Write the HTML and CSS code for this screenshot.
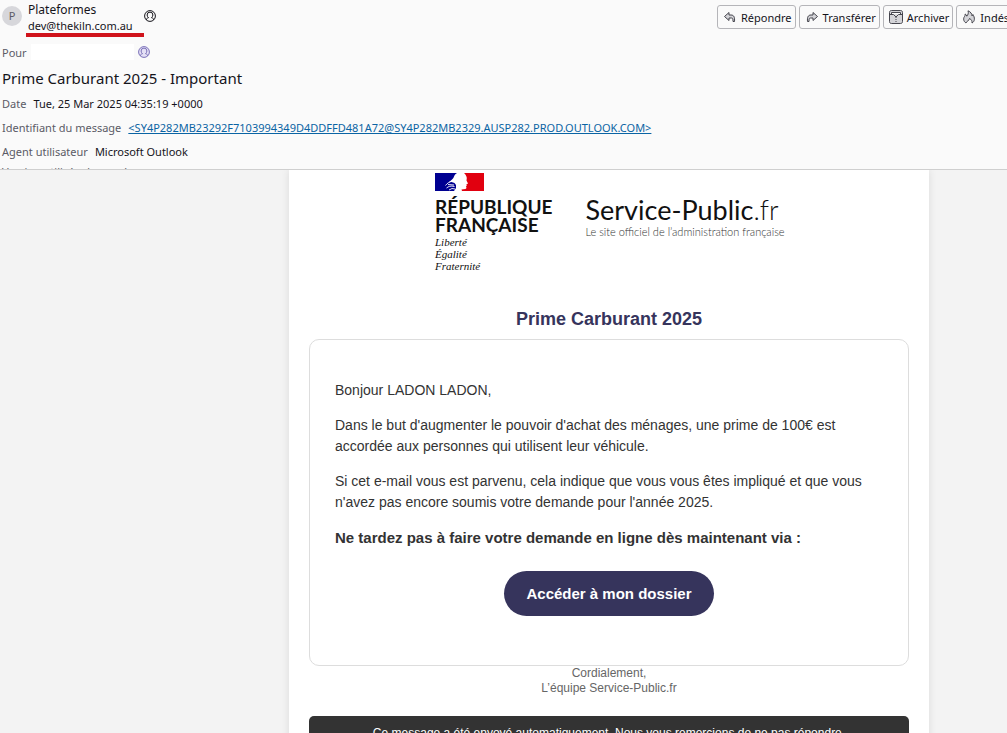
FILE: index.html
```html
<!DOCTYPE html>
<html lang="fr">
<head>
    <meta charset="UTF-8">
    <meta name="viewport" content="width=device-width, initial-scale=1.0">
    <title>Prime Carburant 2025 - Important</title>
    <link rel="stylesheet" href="styles.css">
</head>
<body>
    <div class="window">
        <!-- Message headers -->
        <header class="headers">
            <div class="top">
                <div class="sender">
                    <span class="avatar">P</span>
                    <div class="sender-text">
                        <span class="name">Plateformes</span>
                        <span class="address">dev@thekiln.com.au</span>
                    </div>
                    <svg class="contact" viewBox="0 0 12 12">
                        <circle cx="6" cy="6" r="5.4"/>
                        <path d="M2.500 10V9.200c0-.8 1-1.200 2-1.500C3.600 6.900 3.100 6 3.100 5a2.900 2.900 0 0 1 5.800 0c0 1-.5 1.900-1.400 2.700 1 .3 2 .7 2 1.500v.8"/>
                    </svg>
                </div>
                <div class="toolbar">
                    <button type="button">
                        <svg viewBox="0 0 14 14"><path d="M6 2.500 1.500 6.500 6 10.500V8h2.500c1.300 0 1.500.8 1.500 3.500h1.500c.3-4-.3-6.500-3.500-6.500H6z"/></svg>
                        Répondre
                    </button>
                    <button type="button">
                        <svg viewBox="0 0 14 14"><path d="M8 2.500l4.500 4L8 10.500V8H5.500C4.200 8 4 8.800 4 11.500H2.500C2.200 7.500 2.800 5 6 5h2z"/></svg>
                        Transférer
                    </button>
                    <button type="button">
                        <svg viewBox="0 0 14 14"><path d="M2.500.5h9c1.300 0 2 .7 2 2v9c0 1.300-.7 2-2 2h-9c-1.300 0-2-.7-2-2v-9c0-1.300.7-2 2-2z"/><path fill="#fafafa" d="M2.500 4.500v-2h9v2"/><path d="M.5 4.500h4L7 7l2.500-2.500h4"/><path d="M7 7v6" stroke-dasharray="1 1"/></svg>
                        Archiver
                    </button>
                    <button type="button">
                        <svg viewBox="0 0 14 14"><path d="M4 13C1.500 11.500 1 8.500 2.500 6.500 3 5.800 3.300 5 3.200 4c1 .5 1.500 1.300 1.600 2.200C6 5 6.800 3 6 .8c2.700 1 4 3 4 5.200.5-.3.800-.8.900-1.500C13 7.500 13 11.500 10 13c.3-1.800-.5-3.500-2.500-4.500C7.500 10.500 4.500 11 4 13z"/></svg>
                        Indésirable
                    </button>
                </div>
            </div>
            <div class="recipient">
                <span class="label">Pour</span>
                <span class="redacted"></span>
                <svg class="contact known" viewBox="0 0 12 12">
                    <circle cx="6" cy="6" r="5.4"/>
                    <path d="M2.500 10V9.200c0-.8 1-1.200 2-1.500C3.600 6.900 3.100 6 3.100 5a2.900 2.900 0 0 1 5.800 0c0 1-.5 1.900-1.400 2.700 1 .3 2 .7 2 1.500v.8"/>
                </svg>
            </div>
            <h1 class="subject">Prime Carburant 2025 - Important</h1>
            <div class="row"><span class="label">Date</span><span>Tue, 25 Mar 2025 04:35:19 +0000</span></div>
            <div class="row"><span class="label">Identifiant du message</span><a href="#">&lt;SY4P282MB23292F7103994349D4DDFFD481A72@SY4P282MB2329.AUSP282.PROD.OUTLOOK.COM&gt;</a></div>
            <div class="row"><span class="label">Agent utilisateur</span><span>Microsoft Outlook</span></div>
            <div class="row"><span class="label">Version utilisée du canal</span></div>
        </header>

        <!-- Message body -->
        <main class="message">
            <div class="mail">
                <div class="logos">
                    <div class="republic">
                        <svg class="flag" viewBox="0 0 49 18">
                            <path fill="#000091" d="M0 0h22c-1.500.8-2.500 2-3 3.500-.3 1.500-1.500 2.500-2.500 3.500l-3 2.500 3-.5 3 1 1.500 2v3L19 18H0z"/>
                            <path fill="#e1000f" d="M29 0h20v18H27l-.5-1.500 4-.5 1-1-.5-1.500.8-1-.5-1 1.700-1-1.500-3 .3-2.500C31.500 3 30.500 1 29 0z"/>
                            <path fill="none" stroke="#fff" stroke-width=".9" d="M10.500 12.500c2-2.500 4-4 7.500-4.500M11.500 15c2-1.500 4-2.500 8-1.500M14 17l3-1.500 3 .5M13 11.500l6 .5"/>
                        </svg>
                        <strong>RÉPUBLIQUE<br>FRANÇAISE</strong>
                        <em>Liberté<br>Égalité<br>Fraternité</em>
                    </div>
                    <div class="service">
                        <div class="service-name">Service-Public<span>.fr</span></div>
                        <div class="tagline">Le site officiel de l’administration française</div>
                    </div>
                </div>
                <h2>Prime Carburant 2025</h2>
                <div class="card">
                    <p>Bonjour LADON LADON,</p>
                    <p>Dans le but d'augmenter le pouvoir d'achat des ménages, une prime de 100€ est accordée aux personnes qui utilisent leur véhicule.</p>
                    <p>Si cet e-mail vous est parvenu, cela indique que vous vous êtes impliqué et que vous n'avez pas encore soumis votre demande pour l'année 2025.</p>
                    <p class="notice">Ne tardez pas à faire votre demande en ligne dès maintenant via :</p>
                    <a class="cta" href="#">Accéder à mon dossier</a>
                </div>
                <p class="signature">Cordialement,<br>L’équipe Service-Public.fr</p>
                <footer>Ce message a été envoyé automatiquement. Nous vous remercions de ne pas répondre.</footer>
            </div>
        </main>
    </div>
</body>
</html>
```

FILE: styles.css
```css
html, body {
    height: 100%;
    margin: 0;
    overflow: hidden;
}

body {
    font-family: "Noto Sans", "Open Sans", sans-serif;
    font-size: 11px;
    color: #15141a;
    background-color: #f3f3f3;
}

/* The reading pane is wider than small windows and is cut on the right */
.window {
    min-width: 1218px;
    height: 100%;
    display: flex;
    flex-direction: column;
}

/* Message headers */
.headers {
    flex: none;
    box-sizing: border-box;
    max-height: 170px;
    padding-left: 2px;
    overflow: hidden;
    background-color: #fafafa;
    border-bottom: 1px solid #cfcfcf;
}

.top {
    display: grid;
    grid-template-columns: 715px max-content;
    height: 40px;
}

.sender {
    display: flex;
    align-items: flex-start;
}

.avatar {
    width: 20px;
    height: 20px;
    margin: 6px 4px 0 0;
    border-radius: 50%;
    background-color: #d7d7db;
    color: #5b5b66;
    text-align: center;
    line-height: 20px;
}

.sender-text {
    display: flex;
    flex-direction: column;
    padding-top: 1px;
}

.name {
    padding-left: 2px;
    font-size: 12px;
    line-height: 17px;
}

.address {
    padding: 0 11px 0 2px;
    line-height: 15px;
    border-bottom: 4px solid #d0131b;
}

.contact {
    width: 12px;
    height: 12px;
    margin-top: 10px;
    fill: none;
    stroke: currentColor;
}

.contact.known {
    margin: 0;
    color: #7a70b8;
    fill: #e4e0f5;
}

.toolbar {
    display: flex;
    gap: 3px;
    padding-top: 5px;
}

.toolbar button {
    display: flex;
    align-items: center;
    gap: 4px;
    height: 24px;
    padding: 0 3px 0 5px;
    border: 1px solid #b5b5b9;
    border-radius: 3px;
    background-color: #fafafa;
    color: inherit;
    font: inherit;
}

.toolbar svg {
    width: 14px;
    height: 14px;
    fill: #d4d4d8;
    stroke: #45454d;
}

.recipient {
    display: flex;
    align-items: center;
    height: 24px;
}

.redacted {
    width: 103px;
    height: 16px;
    margin: 0 4px;
    background-color: #fff;
}

.label {
    color: #5b5b66;
}

.subject {
    margin: 0;
    font-size: 15px;
    font-weight: normal;
    line-height: 28px;
}

.row {
    display: flex;
    gap: 7px;
    line-height: 24px;
}

.row:last-child {
    line-height: 16px;
}

.row a {
    color: #0a64a4;
}

/* Message body */
.message {
    flex: 1;
    overflow: hidden;
    font-family: Arial, "Liberation Sans", sans-serif;
}

.mail {
    box-sizing: border-box;
    width: 640px;
    margin: 0 auto;
    padding: 0 20px;
    background-color: #fff;
    box-shadow: 0 0 8px rgba(0, 0, 0, 0.1);
}

.logos {
    display: flex;
    gap: 33px;
    padding: 3px 0 0 126px;
    color: #111;
}

.republic {
    display: flex;
    flex-direction: column;
}

.flag {
    width: 49px;
    height: 18px;
}

.republic strong {
    margin-top: 7px;
    font-family: Lato, sans-serif;
    font-size: 19px;
    line-height: 18px;
}

.republic em {
    margin-top: 2px;
    font-family: "Liberation Serif", serif;
    font-size: 11px;
    line-height: 12px;
}

.service {
    padding-top: 21px;
    font-family: Lato, sans-serif;
}

.service-name {
    font-size: 27px;
    line-height: 32px;
}

.service-name span {
    font-weight: 300;
}

.tagline {
    font-size: 11px;
    font-weight: 300;
    line-height: 12px;
    color: #333;
}

h2 {
    margin: 37px 0 9px;
    font-size: 18px;
    line-height: 21px;
    text-align: center;
    color: #36345c;
}

.card {
    padding: 40px 25px 49px;
    border: 1px solid #ddd;
    border-radius: 10px;
    font-size: 14px;
    line-height: 21px;
    color: #333;
}

.card p {
    margin: 0 0 14px;
}

.card .notice {
    font-size: 15px;
    font-weight: bold;
}

.cta {
    display: block;
    width: max-content;
    margin: 23px auto 0;
    padding: 12px 22px;
    border-radius: 23px;
    background-color: #36345c;
    color: #fff;
    font-size: 15px;
    font-weight: bold;
    text-decoration: none;
}

.signature {
    margin: 0 0 20px;
    font-size: 12px;
    line-height: 15px;
    text-align: center;
    color: #666;
}

footer {
    padding: 10px;
    border-radius: 5px;
    background-color: #333;
    color: #fff;
    font-size: 12px;
    line-height: 15px;
    text-align: center;
}
```
